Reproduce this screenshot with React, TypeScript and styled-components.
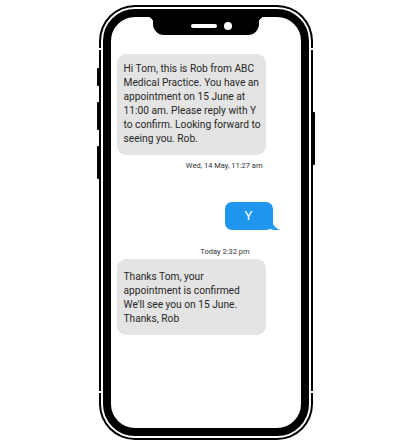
import React from 'react';
import styled, { createGlobalStyle } from 'styled-components';

const GlobalStyle = createGlobalStyle`
  html, body {
    margin: 0;
    padding: 0;
    background: #fff;
  }
  body {
    font-family: Roboto, "Liberation Sans", Arial, sans-serif;
  }
`;

export default function App() {
  return (
    <>
      <GlobalStyle />
      <Page>
        <Rail $side="left">
          <SideButton $height={18} />
          <SideButton $height={28} />
          <SideButton $height={33} />
        </Rail>
        <Phone>
          <Gap>
            <Frame>
              <Notch>
                <Speaker />
                <Camera />
              </Notch>
              <Thread>
                <Incoming $top={19} $padTop={8}>
                  Hi Tom, this is Rob from ABC
                  <br />
                  Medical Practice. You have an
                  <br />
                  appointment on 15 June at
                  <br />
                  11:00 am. Please reply with Y
                  <br />
                  to confirm. Looking forward to
                  <br />
                  seeing you. Rob.
                </Incoming>
                <Stamp $right={32} $top={6}>
                  Wed, 14 May, 11:27 am
                </Stamp>
                <Outgoing>Y</Outgoing>
                <Stamp $right={45} $top={17}>
                  Today 2:32 pm
                </Stamp>
                <Incoming $top={3} $padTop={11}>
                  Thanks Tom, your
                  <br />
                  appointment is confirmed
                  <br />
                  We&apos;ll see you on 15 June.
                  <br />
                  Thanks, Rob
                </Incoming>
              </Thread>
            </Frame>
          </Gap>
        </Phone>
        <Rail $side="right">
          <SideButton $height={53} />
        </Rail>
      </Page>
    </>
  );
}

const Page = styled.div`
  display: flex;
  justify-content: center;
  align-items: flex-start;
  padding-top: 5px;
  width: 411px;
  height: 447px;
  box-sizing: border-box;
`;

const Rail = styled.div<{ $side: 'left' | 'right' }>`
  display: flex;
  flex-direction: column;
  gap: 16px;
  width: 3px;
  padding-top: ${(p) => (p.$side === 'left' ? 63 : 107)}px;
  ${(p) => (p.$side === 'left' ? 'margin-right: -1px;' : 'margin-left: -1px;')}
`;

const SideButton = styled.div<{ $height: number }>`
  width: 3px;
  height: ${(p) => p.$height}px;
  background: #000;
  border-radius: 1px;
`;

const Phone = styled.div`
  width: 214px;
  height: 435px;
  box-sizing: border-box;
  padding: 2px;
  border-radius: 36px;
  background: linear-gradient(
    to bottom,
    #000 0 43px,
    #fff 43px 45px,
    #000 45px 386px,
    #fff 386px 388px,
    #000 388px
  );
`;

const Gap = styled.div`
  height: 100%;
  box-sizing: border-box;
  padding: 2px;
  border-radius: 34px;
  background: #fff;
`;

const Frame = styled.div`
  display: flex;
  flex-direction: column;
  height: 100%;
  box-sizing: border-box;
  border: 8px solid #000;
  border-radius: 32px;
  background: #fff;
  overflow: hidden;
`;

const Notch = styled.div`
  position: relative;
  align-self: center;
  display: flex;
  align-items: center;
  justify-content: center;
  gap: 7px;
  padding-left: 11px;
  box-sizing: border-box;
  width: 106px;
  height: 18px;
  background: #000;
  border-radius: 0 0 11px 11px;

  &::before,
  &::after {
    content: '';
    position: absolute;
    top: 0;
    width: 6px;
    height: 6px;
  }
  &::before {
    left: -6px;
    background: radial-gradient(circle at 0 100%, transparent 6px, #000 6.5px);
  }
  &::after {
    right: -6px;
    background: radial-gradient(circle at 100% 100%, transparent 6px, #000 6.5px);
  }
`;

const Speaker = styled.div`
  width: 26px;
  height: 4px;
  border-radius: 2px;
  background: #fff;
`;

const Camera = styled.div`
  width: 8px;
  height: 8px;
  border-radius: 50%;
  background: #fff;
`;

const Thread = styled.div`
  display: flex;
  flex-direction: column;
  padding: 0 6px;
`;

const Incoming = styled.div<{ $top: number; $padTop: number }>`
  align-self: flex-start;
  margin-top: ${(p) => p.$top}px;
  width: 149px;
  box-sizing: border-box;
  padding: ${(p) => p.$padTop}px 6px 9px 7px;
  background: #e4e4e4;
  border-radius: 9px;
  color: #262626;
  font-size: 10.2px;
  line-height: 14px;
  white-space: nowrap;
`;

const Stamp = styled.div<{ $right: number; $top: number }>`
  align-self: flex-end;
  margin-right: ${(p) => p.$right}px;
  margin-top: ${(p) => p.$top}px;
  font-size: 7.5px;
  line-height: 9px;
  color: #333;
`;

const Outgoing = styled.div`
  position: relative;
  align-self: flex-end;
  margin-right: 22px;
  margin-top: 32px;
  width: 48px;
  height: 28px;
  border-radius: 7px;
  background: #1e96ee;
  color: #fff;
  font-size: 13px;
  line-height: 28px;
  text-align: center;

  &::after {
    content: '';
    position: absolute;
    right: -8px;
    bottom: 0;
    width: 12px;
    height: 10px;
    background: #1e96ee;
    clip-path: path('M0 0 L3 0 Q5 8 12 10 Q4 11 0 8 Z');
  }
`;
